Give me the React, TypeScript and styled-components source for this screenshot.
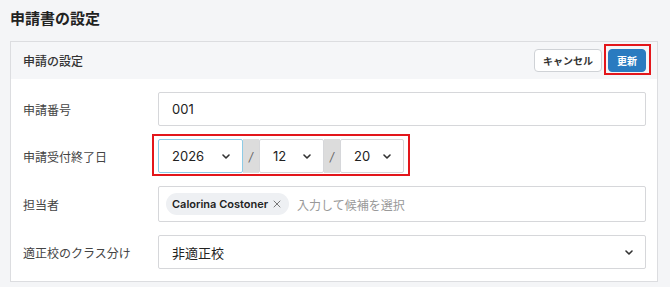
import styled, { createGlobalStyle } from "styled-components";

const GlobalStyle = createGlobalStyle`
  body {
    margin: 0;
    background: #f4f5f7;
    font-family: "Inter", "Noto Sans CJK JP", sans-serif;
    color: #333;
  }
`;

const Page = styled.div`
  padding: 8px 12px 0 10px;
`;

const Title = styled.h1`
  margin: 0 0 11px;
  font-size: 15px;
  line-height: 22px;
  font-weight: 700;
  color: #222;
`;

const Card = styled.section`
  background: #fff;
  border: 1px solid #dcdde0;
`;

const CardHeader = styled.div`
  display: flex;
  align-items: center;
  justify-content: space-between;
  height: 37px;
  padding: 0 11px 0 12px;
  background: #f5f6f8;
`;

const HeaderTitle = styled.h2`
  margin: 0;
  font-size: 12px;
  font-weight: 500;
  color: #333;
`;

const Actions = styled.div`
  display: flex;
  gap: 6px;
  align-items: center;
`;

/* red annotation frame around an element, drawn without moving it */
const Marker = styled.div<{ $t: number; $r: number; $b: number; $l: number }>`
  display: flex;
  border: 2px solid #e3161b;
  padding: ${(p) => `${p.$t}px ${p.$r}px ${p.$b}px ${p.$l}px`};
  margin: ${(p) => `${-p.$t - 2}px ${-p.$r - 2}px ${-p.$b - 2}px ${-p.$l - 2}px`};
`;

const Button = styled.button<{ $primary?: boolean }>`
  height: 23px;
  padding: 0 8px;
  border-radius: 4px;
  font-family: inherit;
  font-size: 10px;
  font-weight: 700;
  cursor: pointer;
  border: 1px solid ${(p) => (p.$primary ? "#2a7bc0" : "#cfd2d6")};
  background: ${(p) => (p.$primary ? "#2a7bc0" : "#fff")};
  color: ${(p) => (p.$primary ? "#fff" : "#333")};
`;

const Body = styled.div`
  display: flex;
  flex-direction: column;
  gap: 13px;
  padding: 13px 11px 12px 12px;
`;

const Row = styled.div`
  display: grid;
  grid-template-columns: 135px 1fr;
  align-items: center;
`;

const Label = styled.label`
  font-size: 12px;
  color: #444;
`;

const Field = styled.div<{ $focused?: boolean; $height?: number }>`
  display: flex;
  align-items: center;
  box-sizing: border-box;
  height: ${(p) => p.$height ?? 34}px;
  padding: 0 12px 0 13px;
  border: 1px solid ${(p) => (p.$focused ? "#8dcbe6" : "#d6d7da")};
  border-radius: 2px;
  background: #fff;
  font-size: 13px;
  color: #222;
`;

const SelectField = styled(Field)<{ $width?: number }>`
  justify-content: space-between;
  ${(p) => (p.$width ? `width: ${p.$width}px;` : "")}
`;

const DateCell = styled.div`
  justify-self: start;
`;

const DateGroup = styled.div`
  display: flex;
`;

const Sep = styled.span`
  display: flex;
  align-items: center;
  justify-content: center;
  width: 16px;
  height: 34px;
  background: #dcdcdc;
  color: #666;
  font-size: 12px;
  font-style: italic;
`;

const TagField = styled(Field)`
  padding-left: 7px;
  gap: 8px;
`;

const Chip = styled.span`
  display: inline-flex;
  align-items: center;
  gap: 5px;
  height: 22px;
  padding: 0 8px 0 6px;
  border-radius: 11px;
  background: #eef0f3;
  font-size: 11px;
  font-weight: 600;
  color: #222;
`;

const Placeholder = styled.span`
  font-size: 12px;
  color: #999;
`;

const Chevron = () => (
  <svg width="8" height="5" viewBox="0 0 8 5" fill="none">
    <path d="M1 1l3 3 3-3" stroke="#333" strokeWidth="1.6" strokeLinecap="round" strokeLinejoin="round" />
  </svg>
);

const CloseIcon = () => (
  <svg width="8" height="8" viewBox="0 0 8 8" fill="none">
    <path d="M1 1l6 6M7 1L1 7" stroke="#777" strokeWidth="1" strokeLinecap="round" />
  </svg>
);

export default function App() {
  return (
    <Page>
      <GlobalStyle />
      <Title>申請書の設定</Title>
      <Card>
        <CardHeader>
          <HeaderTitle>申請の設定</HeaderTitle>
          <Actions>
            <Button>キャンセル</Button>
            <Marker $t={3} $r={3} $b={1} $l={2}>
              <Button $primary>更新</Button>
            </Marker>
          </Actions>
        </CardHeader>
        <Body>
          <Row>
            <Label>申請番号</Label>
            <Field>001</Field>
          </Row>
          <Row>
            <Label>申請受付終了日</Label>
            <DateCell>
              <Marker $t={3} $r={4} $b={1} $l={4}>
                <DateGroup>
                  <SelectField $width={85} $focused>
                    2026
                    <Chevron />
                  </SelectField>
                  <Sep>/</Sep>
                  <SelectField $width={65}>
                    12
                    <Chevron />
                  </SelectField>
                  <Sep>/</Sep>
                  <SelectField $width={64}>
                    20
                    <Chevron />
                  </SelectField>
                </DateGroup>
              </Marker>
            </DateCell>
          </Row>
          <Row>
            <Label>担当者</Label>
            <TagField $height={36}>
              <Chip>
                Calorina Costoner
                <CloseIcon />
              </Chip>
              <Placeholder>入力して候補を選択</Placeholder>
            </TagField>
          </Row>
          <Row>
            <Label>適正校のクラス分け</Label>
            <SelectField>
              <span>非適正校</span>
              <Chevron />
            </SelectField>
          </Row>
        </Body>
      </Card>
    </Page>
  );
}
